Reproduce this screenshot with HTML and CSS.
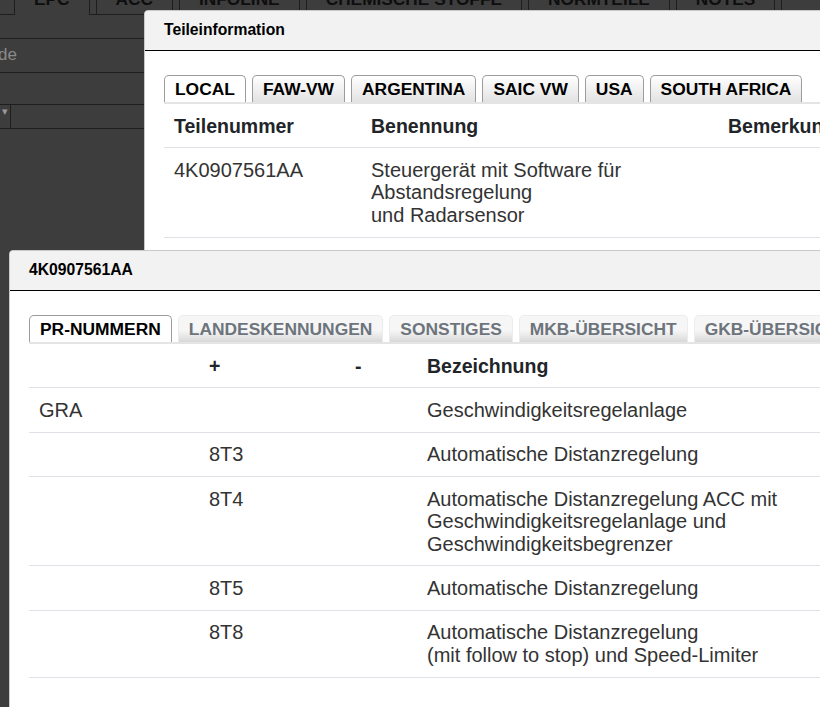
FILE: index.html
```html
<!DOCTYPE html>
<html lang="de">
<head>
    <meta charset="UTF-8" />
    <meta name="viewport" content="width=device-width, initial-scale=1.0" />
    <title>Teileinformation</title>
    <link rel="stylesheet" href="styles.css">
</head>
<body>

    <!-- Background application (dimmed) -->
    <div class="app">
        <div class="app-tabs">
            <div class="app-tab active">EPC</div>
            <div class="app-tab">ACC</div>
            <div class="app-tab">INFOLINE</div>
            <div class="app-tab">CHEMISCHE STOFFE</div>
            <div class="app-tab">NORMTEILE</div>
            <div class="app-tab">NOTES</div>
            <div class="app-tab app-tab-empty"></div>
        </div>
        <div class="app-toolbar"></div>
        <div class="app-search"><span class="search-hint">de</span></div>
        <div class="app-row"></div>
        <div class="app-filter"><span class="select-arrow">&#9662;</span></div>
    </div>

    <!-- Teileinformation -->
    <div class="dialog dialog-parts">
        <div class="dialog-head">Teileinformation</div>
        <div class="dialog-body">
            <div class="tabs">
                <div class="tab active">LOCAL</div>
                <div class="tab">FAW-VW</div>
                <div class="tab">ARGENTINA</div>
                <div class="tab">SAIC VW</div>
                <div class="tab">USA</div>
                <div class="tab">SOUTH AFRICA</div>
            </div>
            <table>
                <colgroup>
                    <col class="c-part">
                    <col class="c-name">
                    <col>
                </colgroup>
                <tr>
                    <th>Teilenummer</th>
                    <th>Benennung</th>
                    <th>Bemerkung</th>
                </tr>
                <tr>
                    <td>4K0907561AA</td>
                    <td>Steuergerät mit Software für<br>Abstandsregelung<br>und Radarsensor</td>
                    <td></td>
                </tr>
            </table>
        </div>
    </div>

    <!-- PR-Nummern -->
    <div class="dialog dialog-pr">
        <div class="dialog-head">4K0907561AA</div>
        <div class="dialog-body">
            <div class="tabs tabs-muted">
                <div class="tab active">PR-NUMMERN</div>
                <div class="tab">LANDESKENNUNGEN</div>
                <div class="tab">SONSTIGES</div>
                <div class="tab">MKB-ÜBERSICHT</div>
                <div class="tab">GKB-ÜBERSICHT</div>
            </div>
            <table>
                <colgroup>
                    <col class="c-family">
                    <col class="c-plus">
                    <col class="c-minus">
                    <col>
                </colgroup>
                <tr>
                    <th></th>
                    <th>+</th>
                    <th>-</th>
                    <th>Bezeichnung</th>
                </tr>
                <tr>
                    <td>GRA</td>
                    <td></td>
                    <td></td>
                    <td>Geschwindigkeitsregelanlage</td>
                </tr>
                <tr>
                    <td></td>
                    <td>8T3</td>
                    <td></td>
                    <td>Automatische Distanzregelung</td>
                </tr>
                <tr>
                    <td></td>
                    <td>8T4</td>
                    <td></td>
                    <td>Automatische Distanzregelung ACC mit<br>Geschwindigkeitsregelanlage und<br>Geschwindigkeitsbegrenzer</td>
                </tr>
                <tr>
                    <td></td>
                    <td>8T5</td>
                    <td></td>
                    <td>Automatische Distanzregelung</td>
                </tr>
                <tr>
                    <td></td>
                    <td>8T8</td>
                    <td></td>
                    <td>Automatische Distanzregelung<br>(mit follow to stop) und Speed-Limiter</td>
                </tr>
            </table>
        </div>
    </div>

</body>
</html>
```

FILE: styles.css
```css
* {
    margin: 0;
    padding: 0;
    box-sizing: border-box;
}

html, body {
    height: 100%;
    overflow: hidden;
}

body {
    position: relative;
    background: #3d3d3d;
    font-family: "Liberation Sans", Arial, sans-serif;
    color: #212529;
}

/* background app */

.app-tabs {
    display: flex;
    gap: 6px;
    height: 36px;
    margin-top: -21px;
    padding-left: 14px;
    border-bottom: 1px solid #1e1e1e;
}

.app-tab {
    padding: 0 19px;
    border: 1px solid #1e1e1e;
    border-bottom: none;
    font-size: 17.3px;
    font-weight: bold;
    line-height: 38px;
    color: #0e0e0e;
    white-space: nowrap;
}

    .app-tab.active {
        margin-bottom: -1px;
        background: #3d3d3d;
    }

.app-tab-empty {
    flex: 1;
}

.app-toolbar {
    height: 24px;
    border-bottom: 1px solid #1e1e1e;
}

.app-search {
    height: 34px;
    border-bottom: 1px solid #1e1e1e;
    font-size: 17px;
    line-height: 32px;
    color: #8a8a8a;
}

.search-hint {
    margin-left: -2px;
}

.app-row {
    height: 32px;
    border-bottom: 1px solid #1e1e1e;
}

.app-filter {
    height: 24px;
    border-bottom: 1px solid #1e1e1e;
}

.select-arrow {
    display: block;
    width: 11px;
    height: 100%;
    border-right: 1px solid #1e1e1e;
    font-size: 11px;
    line-height: 12px;
    text-align: right;
    padding-right: 2px;
    color: #9a9a9a;
}

/* dialogs */

.dialog {
    position: absolute;
    background: #fff;
    border: 1px solid #c9c9c9;
    border-radius: 4px;
    overflow: hidden;
}

.dialog-parts {
    left: 144px;
    top: 10px;
    width: 760px;
    height: 250px;
}

.dialog-pr {
    left: 9px;
    top: 250px;
    width: 900px;
    height: 520px;
}

.dialog-head {
    height: 40px;
    padding-left: 19px;
    background: #f2f2f2;
    border-bottom: 1px solid #000;
    font-size: 15.7px;
    font-weight: bold;
    line-height: 38px;
    color: #000;
}

.dialog-body {
    padding: 24px 19px;
}

.tabs {
    display: flex;
    gap: 6px;
    border-bottom: 2px solid #e4e4e4;
}

.tab {
    padding: 0 10px;
    border: 1px solid #9c9c9c;
    border-bottom: none;
    border-radius: 5px 5px 0 0;
    background: linear-gradient(#fff, #e2e2e2);
    font-size: 17.4px;
    font-weight: bold;
    line-height: 26px;
    color: #000;
    white-space: nowrap;
}

    .tab.active {
        background: #fff;
    }

.tabs-muted .tab {
    border-color: #ececec;
    background: linear-gradient(#f6f6f6 55%, #d8d8d8);
    color: #6d747c;
}

    .tabs-muted .tab.active {
        border-color: #9c9c9c;
        background: #fff;
        color: #000;
    }

table {
    width: 100%;
    border-collapse: collapse;
    table-layout: fixed;
}

th, td {
    padding: 10.5px 10px;
    border-bottom: 1px solid #dee2e6;
    line-height: 22.4px;
    text-align: left;
    vertical-align: top;
    white-space: nowrap;
}

th {
    font-size: 19.5px;
    font-weight: bold;
    color: #212529;
}

td {
    font-size: 20px;
    color: #333;
}

.c-part { width: 197px; }
.c-name { width: 357px; }

.c-family { width: 170px; }
.c-plus { width: 146px; }
.c-minus { width: 72px; }
```
